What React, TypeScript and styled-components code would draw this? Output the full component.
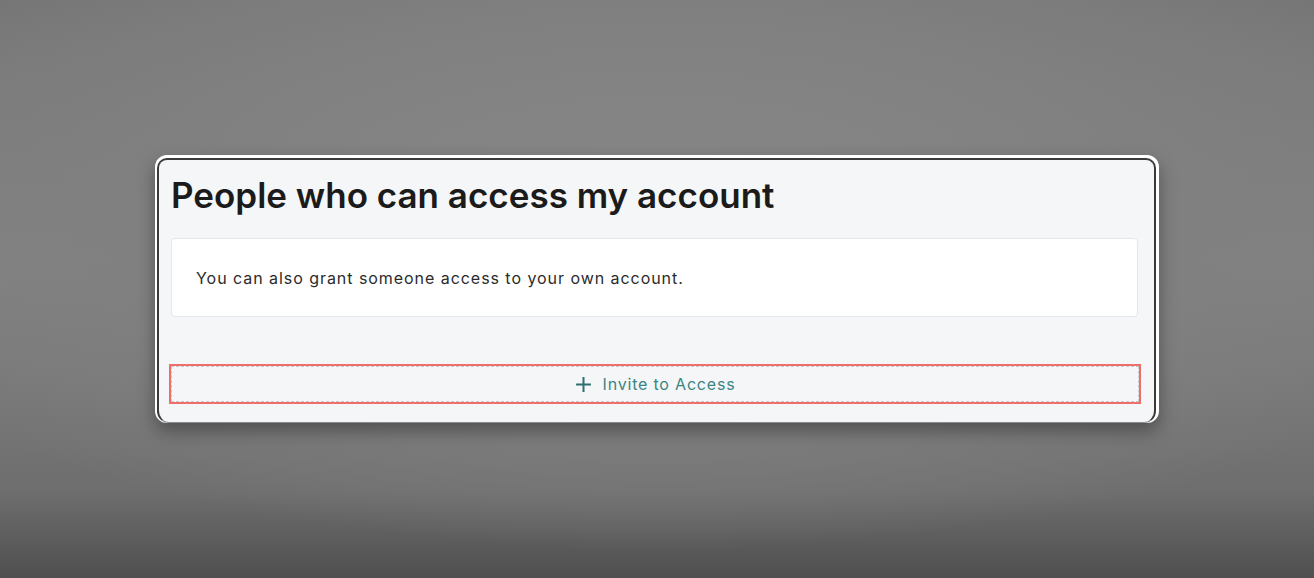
import React from 'react';
import styled, { createGlobalStyle } from 'styled-components';

const GlobalStyle = createGlobalStyle`
  html, body {
    margin: 0;
    padding: 0;
  }
  body {
    font-family: 'Inter', 'Noto Sans', sans-serif;
  }
`;

const Backdrop = styled.div`
  min-height: 578px;
  display: flex;
  align-items: center;
  justify-content: center;
  background:
    radial-gradient(ellipse 70% 60% at 50% 35%, #878787 0%, #808080 55%, transparent 100%),
    linear-gradient(180deg, #747474 0%, #838383 45%, #6e6e6e 85%, #4f4f4f 100%);
`;

const Frame = styled.div`
  width: 1004px;
  height: 268px;
  box-sizing: border-box;
  background: #ffffff;
  border-radius: 12px;
  padding: 3px 3px 0 2px;
  box-shadow: 0 8px 18px rgba(0, 0, 0, 0.35);
  display: flex;
`;

const Panel = styled.section`
  flex: 1;
  background: #f5f6f8;
  border: 2px solid #3a3a3a;
  border-bottom: 1px solid #8a8a8a;
  border-radius: 10px 10px 12px 12px;
  padding: 13px 16px 16px 12px;
  display: flex;
  flex-direction: column;
`;

const Title = styled.h1`
  margin: 0;
  font-size: 35px;
  font-weight: 600;
  letter-spacing: 0;
  color: #1b1b1b;
  line-height: 44px;
`;

const InfoBox = styled.div`
  margin-top: 21px;
  height: 79px;
  box-sizing: border-box;
  background: #ffffff;
  border: 1px solid #e4e6eb;
  border-radius: 4px;
  display: flex;
  align-items: center;
  padding: 0 24px;
  font-size: 16px;
  letter-spacing: 0.95px;
  color: #2b2b2b;
`;

const InviteButton = styled.button`
  margin: 49px -1px 0 0;
  height: 36px;
  box-sizing: border-box;
  background: #f5f6f8;
  border: 1px dashed #c9ccd2;
  outline: 2px solid #ee6e68;
  outline-offset: 0;
  display: flex;
  align-items: center;
  justify-content: center;
  gap: 11px;
  font-family: inherit;
  font-size: 16px;
  letter-spacing: 0.8px;
  color: #3b8583;
  cursor: pointer;
`;

const PlusIcon = () => (
  <svg width="17" height="17" viewBox="0 0 16 16" aria-hidden="true">
    <path d="M8 1v14M1 8h14" stroke="#2f6f70" strokeWidth="1.9" fill="none" />
  </svg>
);

export default function App() {
  return (
    <>
      <GlobalStyle />
      <Backdrop>
        <Frame>
          <Panel>
            <Title>People who can access my account</Title>
            <InfoBox>You can also grant someone access to your own account.</InfoBox>
            <InviteButton type="button">
              <PlusIcon />
              Invite to Access
            </InviteButton>
          </Panel>
        </Frame>
      </Backdrop>
    </>
  );
}
